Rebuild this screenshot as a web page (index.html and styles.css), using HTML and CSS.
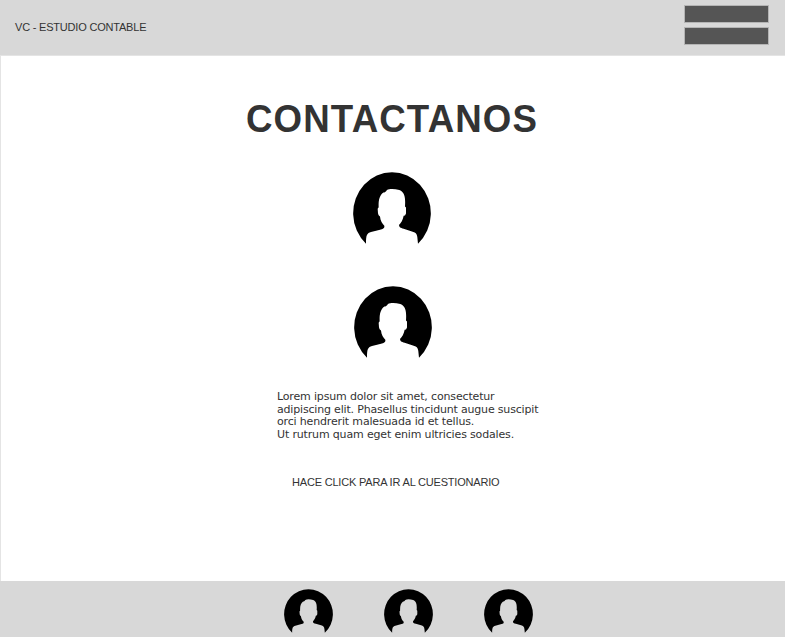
FILE: index.html
```html
<!DOCTYPE html>
<html lang="es">
<head>
<meta charset="utf-8">
<title>VC - Estudio Contable</title>
<link rel="stylesheet" href="styles.css">
</head>
<body>
<svg class="defs" aria-hidden="true">
  <symbol id="user" viewBox="26 21 234 217" preserveAspectRatio="none">
    <path d="M65 237A116.5 123.4 0 1 1 221 237L219 218C218 206 213 203 203 200L178 192C168 190 165 188 164 181C170 175 176 165 178 153L182 152L185 146V128L182 125C183 105 184 82 165 75C150 71 135 71 128 75C124 82 121 82 117 83C105 92 102 108 103 127L100 132L101 145C102 151 105 153 107 155C108 168 114 176 120 183C121 190 118 192 110 194L80 202C68 206 65 210 65 237Z"/>
  </symbol>
</svg>
<header class="header">
  <span class="brand">VC - ESTUDIO CONTABLE</span>
  <div class="menu"><span class="bar"></span><span class="bar"></span></div>
</header>
<main class="main">
  <h1 class="title">CONTACTANOS</h1>
  <svg class="avatar"><use href="#user"/></svg>
  <svg class="avatar avatar-second"><use href="#user"/></svg>
  <p class="copy"><span class="l1">Lorem ipsum dolor sit amet, consectetur</span><br><span class="l2">adipiscing elit. Phasellus tincidunt augue suscipit</span><br><span class="l3">orci hendrerit malesuada id et tellus.</span><br><span class="l4">Ut rutrum quam eget enim ultricies sodales.</span></p>
  <a class="link">HACE CLICK PARA IR AL CUESTIONARIO</a>
</main>
<footer class="footer">
  <svg class="social"><use href="#user"/></svg>
  <svg class="social"><use href="#user"/></svg>
  <svg class="social"><use href="#user"/></svg>
</footer>
</body>
</html>
```
FILE: styles.css
```css
* { box-sizing: border-box; }
body {
  margin: 0;
  height: 637px;
  display: flex;
  flex-direction: column;
  overflow: hidden;
  background: #fff;
  color: #333;
  font-family: "Liberation Sans", Arial, sans-serif;
}
.defs { display: none; }
.header {
  height: 55px;
  flex: none;
  display: flex;
  justify-content: space-between;
  padding: 5px 16px 0 15px;
  background: #d8d8d8;
}
.brand {
  margin-top: 16px;
  font-size: 11px;
  line-height: 13px;
  letter-spacing: -0.2px;
}
.menu { display: flex; flex-direction: column; gap: 4px; }
.bar {
  width: 85px;
  height: 18px;
  background: #555;
  border: 1px solid #b4b4b4;
}
.main {
  height: 526px;
  flex: none;
  display: flex;
  flex-direction: column;
  align-items: flex-start;
  border: solid #e4e4e4;
  border-width: 1px 0 0 1px;
}
.title {
  margin: 40px 0 0 245px;
  font-size: 39px;
  line-height: 46px;
  letter-spacing: 1.2px;
  white-space: nowrap;
  transform: scaleX(0.94);
  transform-origin: left;
}
.avatar {
  display: block;
  width: 78px;
  height: 72px;
  margin: 30px 0 0 352px;
}
.avatar-second { margin: 42px 0 0 353px; }
.copy {
  margin: 33px 0 0 276px;
  font-family: "DejaVu Sans", Verdana, sans-serif;
  font-size: 11px;
  line-height: 12.67px;
  letter-spacing: -0.16px;
  white-space: nowrap;
}
.l2 { letter-spacing: -0.18px; }
.link {
  margin: 34px 0 0 291px;
  font-size: 11px;
  line-height: 13px;
  letter-spacing: -0.19px;
  white-space: nowrap;
}
.footer {
  height: 56px;
  flex: none;
  display: flex;
  gap: 51px;
  padding: 8px 0 0 284px;
  background: #d8d8d8;
}
.social { width: 49px; height: 44px; }
```
